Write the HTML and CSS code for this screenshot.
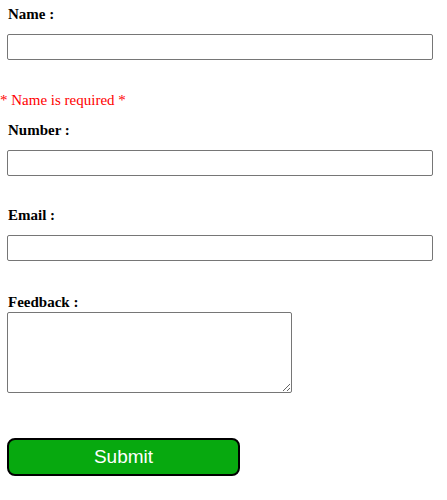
FILE: index.html
```html
<!DOCTYPE html>
<html>
<head>
<meta charset="utf-8">
<link rel="stylesheet" href="styles.css">
</head>
<body>
<form class="form">
  <div class="field">
    <label class="label">Name :</label>
    <input class="input" type="text">
  </div>
  <div class="error">* Name is required *</div>
  <div class="field">
    <label class="label">Number :</label>
    <input class="input" type="text">
  </div>
  <div class="field">
    <label class="label">Email :</label>
    <input class="input" type="text">
  </div>
  <div class="field field-feedback">
    <label class="label">Feedback :</label>
    <textarea class="textarea"></textarea>
  </div>
  <button class="submit" type="button">Submit</button>
</form>
</body>
</html>
```
FILE: styles.css
```css
html, body {
  margin: 0;
  padding: 0;
  background: #fff;
}
body {
  padding: 0 14px 0 7px;
  font-family: "Liberation Serif", "Times New Roman", serif;
  font-size: 15px;
  color: #000;
}
.form {
  display: flex;
  flex-direction: column;
}
.field {
  display: flex;
  flex-direction: column;
  align-items: flex-start;
}
.label {
  font-family: "Liberation Serif", "Times New Roman", serif;
  font-weight: bold;
  line-height: 17px;
  margin: 6px 0 0 1px;
}
.input {
  box-sizing: border-box;
  width: 100%;
  height: 26px;
  margin: 11px 0 0 0;
  border: 1px solid #767676;
  border-radius: 2px;
  padding: 0;
  font: inherit;
}
.error {
  font-family: "Liberation Serif", "Times New Roman", serif;
  color: #ff0000;
  margin: 32px 0 0 -7px;
  line-height: 17px;
  font-size: 15px;
}
.field + .field {
  margin-top: 25px;
}
.error + .field {
  margin-top: 7px;
}
.field + .field-feedback {
  margin-top: 27px;
}
.textarea {
  box-sizing: border-box;
  width: 285px;
  height: 81px;
  margin-top: 1px;
  border: 1px solid #767676;
  border-radius: 2px;
  font: inherit;
}
.submit {
  box-sizing: border-box;
  margin-top: 45px;
  width: 233px;
  height: 38px;
  background: #07a90f;
  border: 2px solid #000;
  border-radius: 8px;
  color: #fff;
  font-family: "Liberation Sans", Arial, sans-serif;
  font-size: 19px;
  padding: 0;
}
```
